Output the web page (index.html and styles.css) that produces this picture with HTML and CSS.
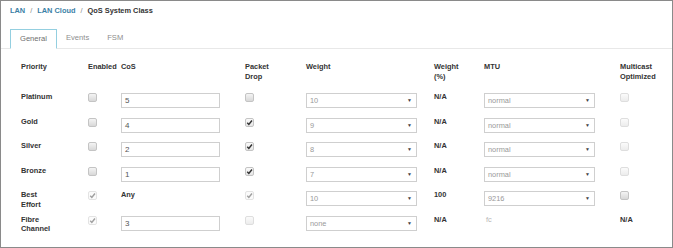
FILE: index.html
```html
<!DOCTYPE html>
<html>
<head>
<meta charset="utf-8">
<link rel="stylesheet" href="styles.css">
</head>
<body>
<div class="frame">
  <div class="crumbs">
    <a class="link">LAN</a><span class="sep">/</span><a class="link">LAN Cloud</a><span class="sep">/</span><span class="current">QoS System Class</span>
  </div>
  <div class="tabs">
    <div class="tab active">General</div>
    <div class="tab">Events</div>
    <div class="tab">FSM</div>
  </div>
  <div class="grid">
    <div class="hd">Priority</div>
    <div class="hd">Enabled</div>
    <div class="hd">CoS</div>
    <div class="hd">Packet<br>Drop</div>
    <div class="hd">Weight</div>
    <div class="hd">Weight<br>(%)</div>
    <div class="hd">MTU</div>
    <div class="hd">Multicast<br>Optimized</div>

    <!-- Platinum -->
    <div class="lbl">Platinum</div>
    <div><span class="cb"></span></div>
    <div><div class="inp">5</div></div>
    <div><span class="cb"></span></div>
    <div><div class="sel"><span>10</span><span class="arr">▼</span></div></div>
    <div class="lbl">N/A</div>
    <div><div class="sel"><span>normal</span><span class="arr">▼</span></div></div>
    <div><span class="cb dis"></span></div>

    <!-- Gold -->
    <div class="lbl">Gold</div>
    <div><span class="cb"></span></div>
    <div><div class="inp">4</div></div>
    <div><span class="cb on"><svg viewBox="0 0 8 8"><path d="M2 4.3 L3.4 5.7 L6.2 2.2"/></svg></span></div>
    <div><div class="sel"><span>9</span><span class="arr">▼</span></div></div>
    <div class="lbl">N/A</div>
    <div><div class="sel"><span>normal</span><span class="arr">▼</span></div></div>
    <div><span class="cb dis"></span></div>

    <!-- Silver -->
    <div class="lbl">Silver</div>
    <div><span class="cb"></span></div>
    <div><div class="inp">2</div></div>
    <div><span class="cb on"><svg viewBox="0 0 8 8"><path d="M2 4.3 L3.4 5.7 L6.2 2.2"/></svg></span></div>
    <div><div class="sel"><span>8</span><span class="arr">▼</span></div></div>
    <div class="lbl">N/A</div>
    <div><div class="sel"><span>normal</span><span class="arr">▼</span></div></div>
    <div><span class="cb dis"></span></div>

    <!-- Bronze -->
    <div class="lbl">Bronze</div>
    <div><span class="cb"></span></div>
    <div><div class="inp">1</div></div>
    <div><span class="cb on"><svg viewBox="0 0 8 8"><path d="M2 4.3 L3.4 5.7 L6.2 2.2"/></svg></span></div>
    <div><div class="sel"><span>7</span><span class="arr">▼</span></div></div>
    <div class="lbl">N/A</div>
    <div><div class="sel"><span>normal</span><span class="arr">▼</span></div></div>
    <div><span class="cb dis"></span></div>

    <!-- Best Effort -->
    <div class="lbl">Best<br>Effort</div>
    <div><span class="cb dis on"><svg viewBox="0 0 8 8"><path d="M2 4.3 L3.4 5.7 L6.2 2.2"/></svg></span></div>
    <div class="lbl">Any</div>
    <div><span class="cb dis on"><svg viewBox="0 0 8 8"><path d="M2 4.3 L3.4 5.7 L6.2 2.2"/></svg></span></div>
    <div><div class="sel"><span>10</span><span class="arr">▼</span></div></div>
    <div class="lbl">100</div>
    <div><div class="sel"><span>9216</span><span class="arr">▼</span></div></div>
    <div><span class="cb"></span></div>

    <!-- Fibre Channel -->
    <div class="lbl">Fibre<br>Channel</div>
    <div><span class="cb dis on"><svg viewBox="0 0 8 8"><path d="M2 4.3 L3.4 5.7 L6.2 2.2"/></svg></span></div>
    <div><div class="inp">3</div></div>
    <div><span class="cb dis"></span></div>
    <div><div class="sel"><span>none</span><span class="arr">▼</span></div></div>
    <div class="lbl">N/A</div>
    <div class="faint">fc</div>
    <div class="lbl">N/A</div>
  </div>
</div>
</body>
</html>
```

FILE: styles.css
```css
html, body {
  margin: 0;
  padding: 0;
  background: #fff;
}
body {
  font-family: "Liberation Sans", Arial, sans-serif;
}
.frame {
  width: 673px;
  height: 248px;
  box-sizing: border-box;
  border: 1px solid #8a8a8a;
  padding-top: 5px;
  overflow: hidden;
}
.crumbs {
  padding-left: 9px;
  font-size: 7.4px;
  font-weight: bold;
  line-height: 10px;
  height: 10px;
}
.link {
  color: #3b7fa6;
}
.sep {
  color: #888;
  font-weight: normal;
  margin: 0 5px;
}
.current {
  color: #333;
}
.tabs {
  margin-top: 13px;
  padding-left: 9px;
  display: flex;
  height: 19px;
  border-bottom: 1px solid #e8e8e8;
}
.tab {
  font-size: 7.6px;
  color: #8e8e8e;
  line-height: 18px;
  padding: 0 9px;
  height: 19px;
  box-sizing: border-box;
}
.tab.active {
  border: 1px solid #94cfe0;
  border-bottom: 1px solid #fff;
  color: #6e6e6e;
  height: 20px;
  line-height: 17px;
  background: #fff;
  width: 47px;
  padding: 0;
  text-align: center;
}
.grid {
  display: grid;
  grid-template-columns: 67px 33px 124px 61px 128px 50px 136px 1fr;
  grid-template-rows: 30px repeat(6, 24.5px);
  padding-left: 20px;
  margin-top: 13px;
  align-items: start;
}
.hd, .lbl {
  font-size: 7.4px;
  font-weight: bold;
  color: #333;
  line-height: 9.5px;
}
.faint {
  font-size: 7.4px;
  color: #b5b5b5;
  line-height: 9.5px;
  padding-left: 2px;
}
.cb {
  display: block;
  width: 7px;
  height: 7px;
  margin-top: 1px;
  border: 1px solid #c4c4c4;
  border-radius: 2px;
  background: linear-gradient(#f4f4f4, #d8d8d8);
  position: relative;
}
.cb.on {
  background: linear-gradient(#fafafa, #e6e6e6);
}
.cb svg {
  position: absolute;
  left: -1px;
  top: -1px;
  width: 9px;
  height: 9px;
  fill: none;
  stroke: #333;
  stroke-width: 1.3;
}
.cb.dis {
  border-color: #dedede;
  background: linear-gradient(#fbfbfb, #ececec);
}
.cb.dis.on {
  border-color: #e3e3e3;
  background: #fbfbfb;
}
.cb.dis svg {
  stroke: #a0a0a0;
}
.inp {
  width: 99px;
  height: 15px;
  margin-top: 1px;
  box-sizing: border-box;
  border: 1px solid #cfcfcf;
  font-size: 8px;
  color: #555;
  line-height: 13px;
  padding-left: 3px;
}
.sel {
  width: 111px;
  height: 15px;
  margin-top: 1px;
  box-sizing: border-box;
  border: 1px solid #cfcfcf;
  font-size: 7.4px;
  color: #999;
  line-height: 13px;
  padding: 0 4px 0 3px;
  display: flex;
  justify-content: space-between;
}
.arr {
  color: #444;
  font-size: 5px;
}
```
